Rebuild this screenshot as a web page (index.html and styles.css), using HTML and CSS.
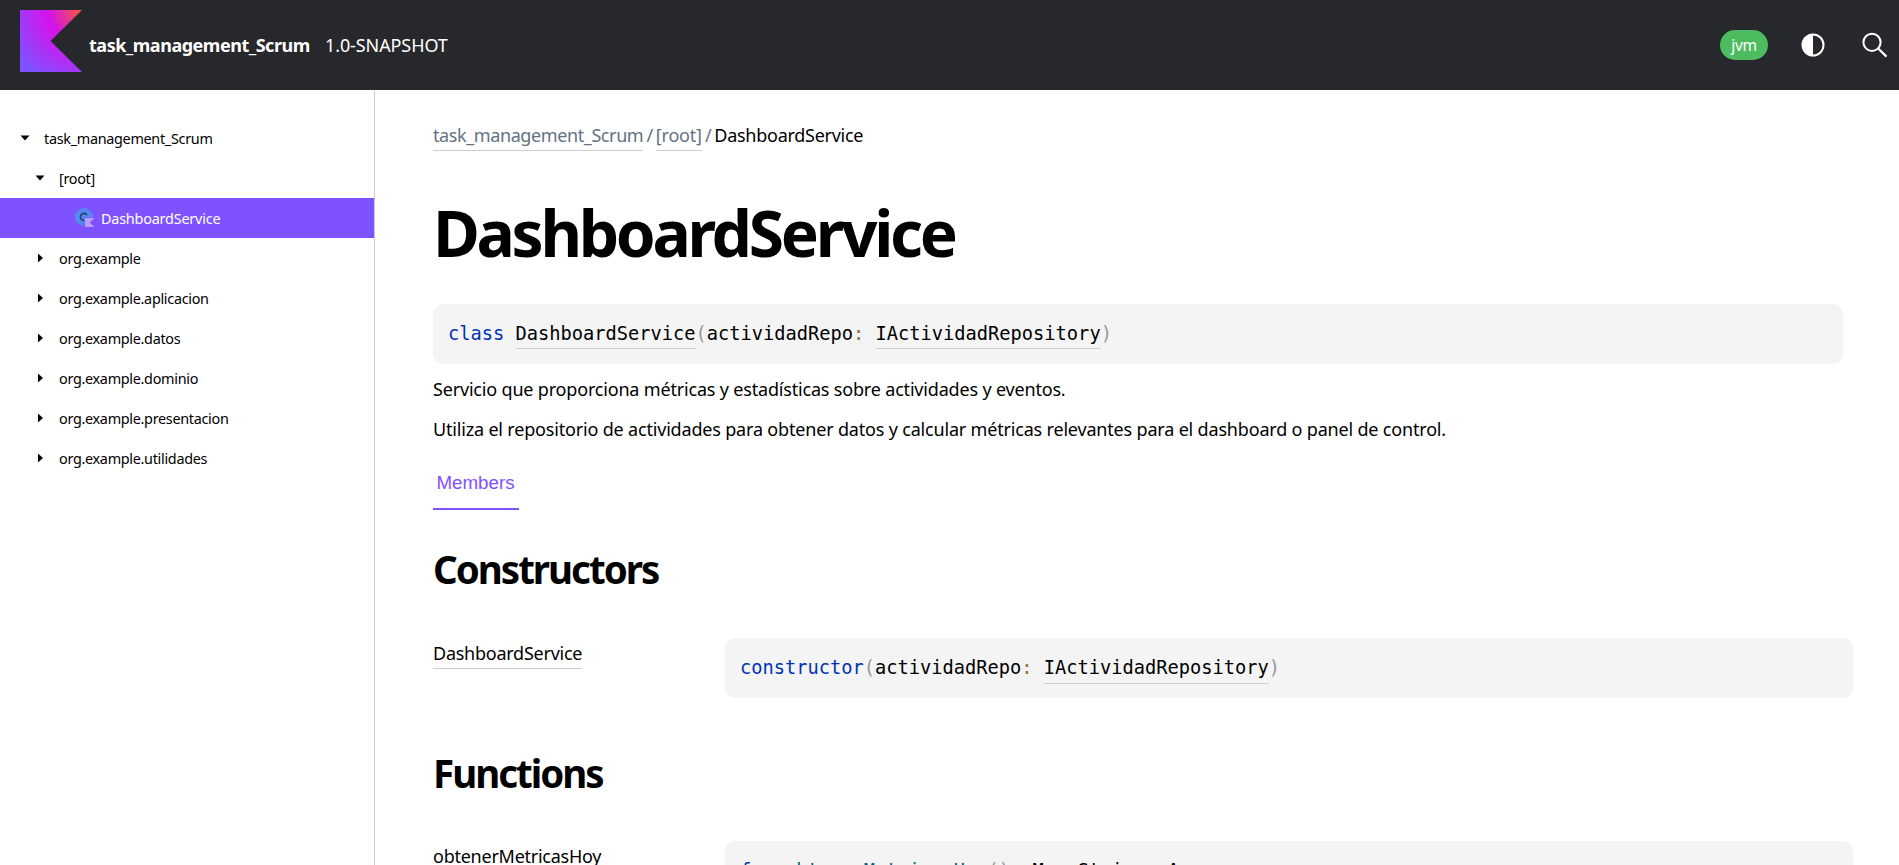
FILE: index.html
```html
<!DOCTYPE html>
<html lang="es">
<head>
<meta charset="utf-8">
<title>DashboardService</title>
<link rel="stylesheet" href="styles.css">
</head>
<body>
<header class="navbar">
  <svg class="logo" viewBox="0 0 62 62">
    <defs><radialGradient id="kt" cx="1" cy="0" r="1.25">
      <stop offset="0" stop-color="#ff5640"/><stop offset=".1" stop-color="#f04a60"/><stop offset=".43" stop-color="#d311ec"/><stop offset=".52" stop-color="#cb1bee"/><stop offset="1" stop-color="#7f52ff"/>
    </radialGradient></defs>
    <path d="M0 0H62L30.5 31 62 62H0Z" fill="url(#kt)"/>
  </svg>
  <a class="project"><span>task_management_Scrum</span></a>
  <span class="version"><span>1.0-SNAPSHOT</span></span>
  <div class="controls">
    <button class="platform">jvm</button>
    <svg class="theme" viewBox="0 0 24 24"><circle cx="12" cy="12" r="10.5" fill="none" stroke="#fff" stroke-width="2"/><path d="M12 1.5a10.5 10.5 0 0 0 0 21z" fill="#fff"/></svg>
    <svg class="search" viewBox="0 0 26 26"><circle cx="10" cy="10.3" r="8.6" fill="none" stroke="#fff" stroke-width="2"/><path d="M16.2 16.5 24.5 24.6" stroke="#fff" stroke-width="2.2"/></svg>
  </div>
</header>
<div class="container">
  <nav class="sidebar">
    <div class="item"><svg class="arrow" viewBox="0 0 10 10"><path d="M.5 2.5h9L5 7.5z"/></svg><span>task_management_Scrum</span></div>
    <div class="item nested"><svg class="arrow" viewBox="0 0 10 10"><path d="M.5 2.5h9L5 7.5z"/></svg><span>[root]</span></div>
    <div class="item active"><svg class="kind" viewBox="0 0 20 20"><circle cx="9" cy="9" r="9" fill="#548af0"/><path d="M12 7A3.6 3.6 0 1 0 9 12.6" fill="none" stroke="#27406e" stroke-width="1.6"/><path d="M9.3 9.3H20V20H9.3z" fill="#7f52ff"/><path d="M10 10h9.5l-4.7 4.5 4.7 4.5H10z" fill="#b99bf8"/></svg><span>DashboardService</span></div>
    <div class="item nested"><svg class="arrow" viewBox="0 0 10 10"><path d="M3 .5v9L8 5z"/></svg><span>org.example</span></div>
    <div class="item nested"><svg class="arrow" viewBox="0 0 10 10"><path d="M3 .5v9L8 5z"/></svg><span>org.example.aplicacion</span></div>
    <div class="item nested"><svg class="arrow" viewBox="0 0 10 10"><path d="M3 .5v9L8 5z"/></svg><span>org.example.datos</span></div>
    <div class="item nested"><svg class="arrow" viewBox="0 0 10 10"><path d="M3 .5v9L8 5z"/></svg><span>org.example.dominio</span></div>
    <div class="item nested"><svg class="arrow" viewBox="0 0 10 10"><path d="M3 .5v9L8 5z"/></svg><span>org.example.presentacion</span></div>
    <div class="item nested"><svg class="arrow" viewBox="0 0 10 10"><path d="M3 .5v9L8 5z"/></svg><span>org.example.utilidades</span></div>
  </nav>
  <main class="main">
    <div class="breadcrumbs"><a>task_management_Scrum</a><i>/</i><a class="pkg">[root]</a><i>/</i><span>DashboardService</span></div>
    <h1>DashboardService</h1>
    <pre class="code signature"><b>class</b> <a>DashboardService</a><s>(</s>actividadRepo<em>:</em> <a>IActividadRepository</a><s>)</s></pre>
    <p class="first">Servicio que proporciona métricas y estadísticas sobre actividades y eventos.</p>
    <p class="second">Utiliza el repositorio de actividades para obtener datos y calcular métricas relevantes para el dashboard o panel de control.</p>
    <div class="tabs"><button class="tab">Members</button></div>
    <h2 class="constructors">Constructors</h2>
    <div class="row"><div class="name"><a>DashboardService</a></div><pre class="code"><b>constructor</b><s>(</s>actividadRepo<em>:</em> <a>IActividadRepository</a><s>)</s></pre></div>
    <h2 class="functions">Functions</h2>
    <div class="row"><div class="name"><a>obtenerMetricasHoy</a></div><pre class="code"><b>fun</b> <a class="fn">obtenerMetricasHoy</a><s>()</s><em>:</em> <a>Map</a>&lt;<a>String</a>, <a>Any</a>&gt;</pre></div>
  </main>
</div>
</body>
</html>
```
FILE: styles.css
```css
* { box-sizing: border-box; }
html, body { height: 100%; }
body { margin: 0; overflow: hidden; background: #fff; color: #000; font-family: "Noto Sans", "Open Sans", sans-serif; font-size: 18px; display: flex; flex-direction: column; }
button { border: 0; margin: 0; background: none; }
.navbar { flex: none; height: 90px; background: #27282c; color: #fff; display: flex; align-items: center; padding: 0 11px 0 20px; }
.logo { width: 62px; height: 62px; margin: -8px 7px 0 0; flex: none; }
.project { font-weight: 700; width: 236px; letter-spacing: -.48px; white-space: nowrap; }
.version { font-size: 18px; letter-spacing: -.1px; white-space: nowrap; }
.controls { margin-left: auto; display: flex; align-items: center; }
.platform { width: 48px; height: 30px; border-radius: 15px; background: #4dbb5f; color: #fff; font: 15.5px "Noto Sans", sans-serif; letter-spacing: -.3px; padding: 0; }
.theme { width: 24px; height: 24px; margin-left: 33px; }
.search { width: 26px; height: 26px; margin-left: 37px; }
.container { flex: 1; min-height: 0; display: flex; }
.sidebar { flex: none; width: 375px; border-right: 1px solid #cdcdcf; padding-top: 28px; font-size: 14.4px; letter-spacing: -.3px; }
.item { height: 40px; display: flex; align-items: center; padding-left: 20px; white-space: nowrap; }
.nested { padding-left: 35px; }
.arrow { width: 10px; height: 10px; margin-right: 14px; flex: none; }
.active { background: #7f52ff; color: #fff; padding-left: 75px; letter-spacing: -.2px; }
.kind { width: 20px; height: 20px; margin-right: 6px; }
.main { flex: 1; min-width: 0; padding: 28px 56px 0 58px; }
.main a { border-bottom: 1px solid #cdcdcf; }
.breadcrumbs { height: 40px; line-height: 35px; display: flex; color: #637282; letter-spacing: -.4px; white-space: nowrap; }
.breadcrumbs a { height: 33px; }
.breadcrumbs .pkg { letter-spacing: -.2px; }
.breadcrumbs i { font-style: normal; width: 12.5px; text-align: center; }
.breadcrumbs span { color: #000; letter-spacing: -.27px; }
h1 { margin: 31px 0 28px; height: 87px; line-height: 87px; font-size: 64px; font-weight: 700; letter-spacing: -3.3px; white-space: nowrap; }
.code { margin: 0; height: 60px; padding: 15px 15px 14px; border-radius: 10px; background: #f4f4f4; font: 18.69px/30px "DejaVu Sans Mono", monospace; white-space: pre; overflow: hidden; }
.code a { padding-bottom: 4px; }
.row .code a { padding-bottom: 5px; }
.code b { font-weight: 400; color: #0033b3; }
.code s { text-decoration: none; color: #999; }
.code em { font-style: normal; color: #9a6e3a; }
.code .fn { color: #00627a; }
.signature { width: 1410px; }
p { margin: 0; height: 30px; line-height: 30px; white-space: nowrap; letter-spacing: -.18px; }
.first { margin-top: 10px; }
.second { margin-top: 10px; }
.tabs { height: 66px; display: flex; }
.tab { width: 86px; padding: 14px 1px 0 0; border-bottom: 2px solid #7f52ff; color: #7f52ff; font: 18.75px "Liberation Sans", sans-serif; }
h2 { margin: 0; height: 54px; line-height: 54px; font-size: 38.5px; letter-spacing: -2px; }
.constructors { margin: 32px 0 42px; }
.functions { margin: 48px 0 41px; }
.row { display: flex; width: 1420px; }
.name { width: 292px; flex: none; line-height: 31px; letter-spacing: -.25px; }
.name a { display: inline-block; height: 31px; }
.row .code { flex: 1; }
```
